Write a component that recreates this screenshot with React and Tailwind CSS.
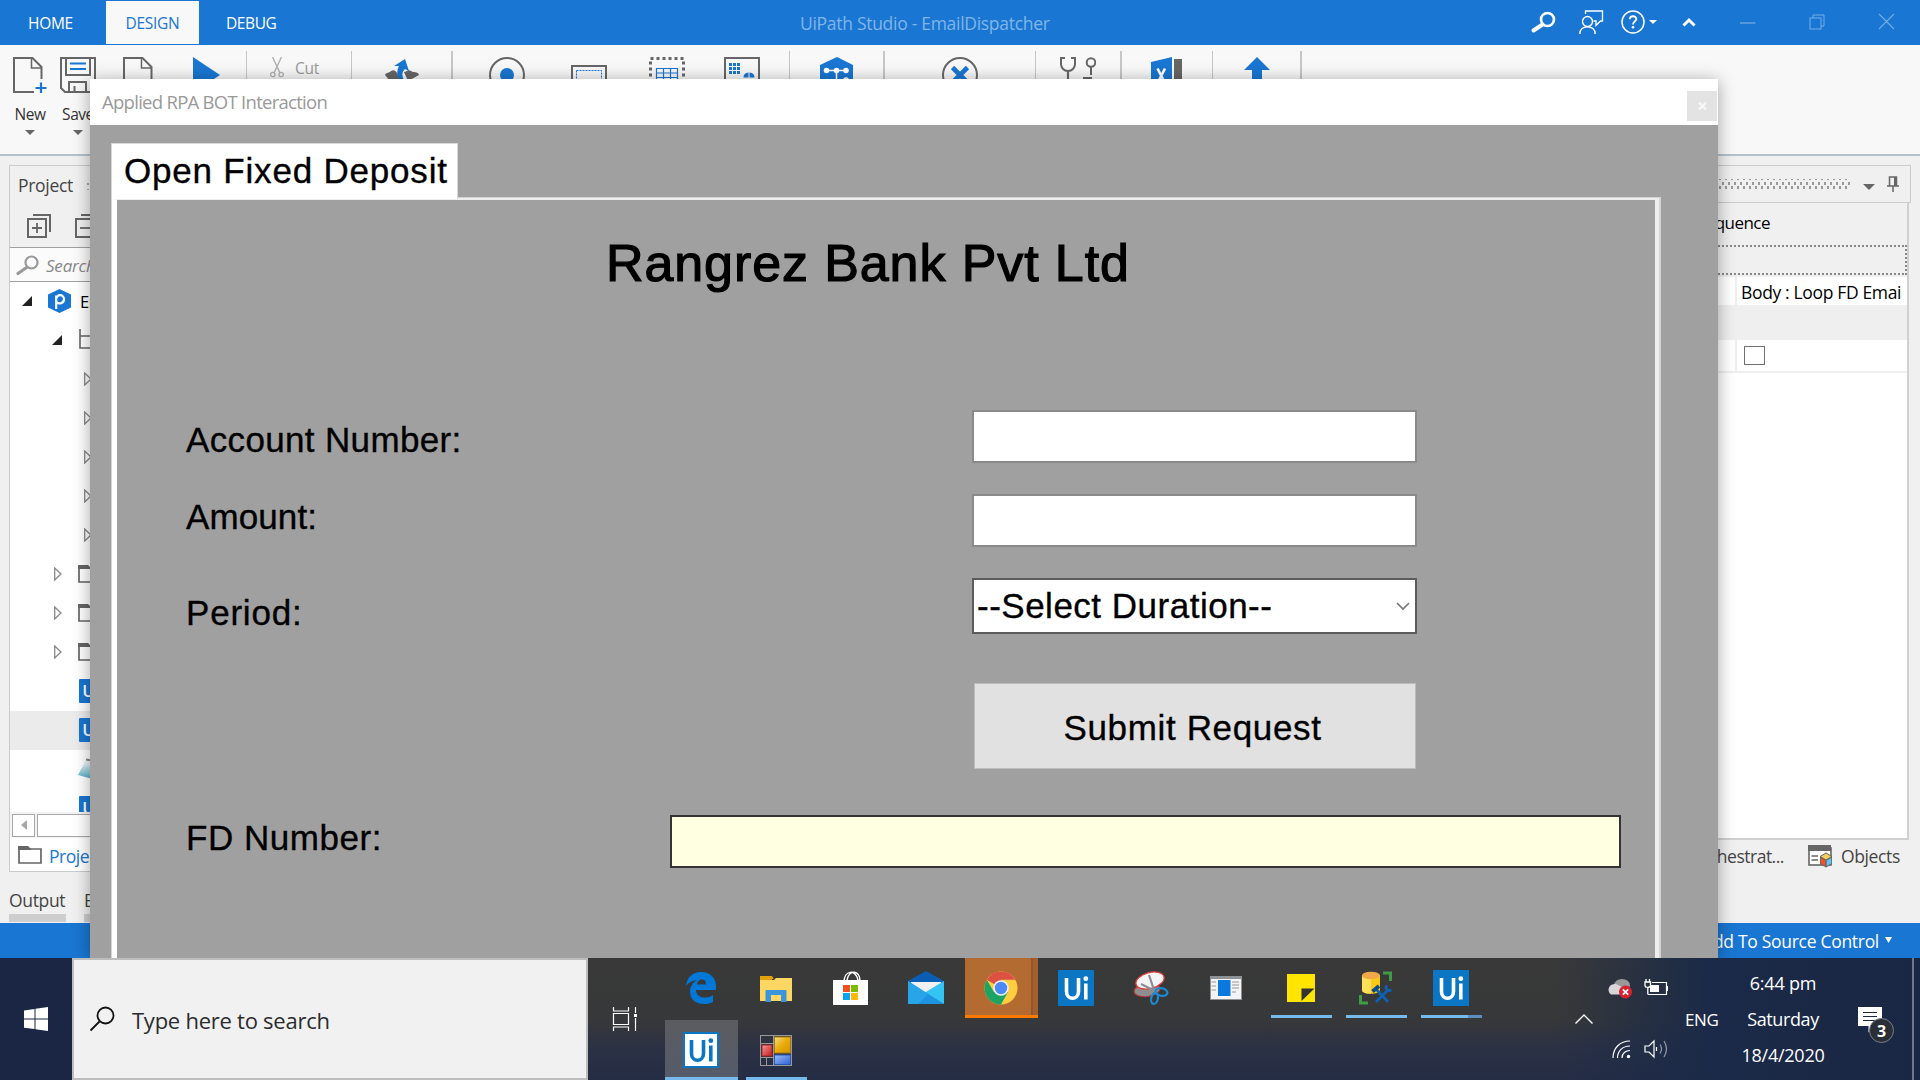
const INK = '#666666';
const BLUE = '#1976d2';

function Svg({ w, h, children, className = '' }) {
  return (
    <svg width={w} height={h} viewBox={`0 0 ${w} ${h}`} fill="none" className={`block shrink-0 ${className}`}>
      {children}
    </svg>
  );
}

function Caret({ className = '' }) {
  return (
    <Svg w={10} h={5} className={className}>
      <path d="M0 0H10L5 5Z" fill={INK} />
    </Svg>
  );
}

/* ---------- title bar ---------- */

function TitleBar() {
  return (
    <header className="relative flex h-[45px] shrink-0 items-stretch bg-[#1976d2] text-[15.5px] text-white">
      <div className="flex w-[106px] items-center pl-[28px] pt-[3px]">
        <span className="tracking-[-0.3px]">HOME</span>
      </div>
      <div className="mt-px flex h-[43px] w-[93px] items-center justify-center bg-[#f8f8f8] pt-[2px] text-[#1976d2]">
        <span className="tracking-[-0.3px]">DESIGN</span>
      </div>
      <div className="flex items-center pl-[27px] pt-[3px]">
        <span className="tracking-[-0.4px]">DEBUG</span>
      </div>
      <div className="pointer-events-none absolute inset-0 flex items-center pl-[800px] pt-[2px] text-[17.5px] text-[#81b5e8]">
        <span className="whitespace-nowrap tracking-[-0.29px]">UiPath Studio - EmailDispatcher</span>
      </div>
      <div className="ml-auto flex items-start pt-[10px]">
        <Svg w={26} h={26} className="mr-[22px]">
          <circle cx="16.500" cy="9.500" r="6.500" stroke="#fff" strokeWidth="2.600" />
          <path d="M11.500 14.500L2.500 20.500" stroke="#fff" strokeWidth="4" strokeLinecap="round" />
        </Svg>
        <Svg w={26} h={26} className="mr-[16px]">
          <path d="M6.500 4V1H23.500V11H21.500L17 15.500V11H14.500" stroke="#fff" strokeWidth="1.300" />
          <circle cx="8.500" cy="11.500" r="5" stroke="#fff" strokeWidth="1.400" />
          <path d="M0.800 24C0.800 19 4.500 16.800 8.500 16.800S16.200 19 16.200 24" stroke="#fff" strokeWidth="1.400" />
        </Svg>
        <div className="mr-[25px] flex h-[24px] items-center">
          <Svg w={24} h={24}>
            <circle cx="12" cy="12" r="11" stroke="#fff" strokeWidth="1.500" />
            <path d="M8.800 9.200C8.800 5.300 15.300 5.300 15.300 9C15.300 11.300 12 11.500 12 14.500" stroke="#fff" strokeWidth="1.900" />
            <circle cx="12" cy="17.300" r="1.300" fill="#fff" />
          </Svg>
          <Svg w={8} h={4} className="ml-[4px]">
            <path d="M0 0H8L4 4Z" fill="#fff" />
          </Svg>
        </div>
        <Svg w={14} h={24} className="mr-[44px]">
          <path d="M1.500 15.500L7 10L12.500 15.500" stroke="#fff" strokeWidth="3" />
        </Svg>
        <Svg w={16} h={24} className="mr-[53px]">
          <path d="M0 13H15.500" stroke="#75aee6" strokeWidth="1.200" />
        </Svg>
        <Svg w={17} h={24} className="mr-[52px]">
          <rect x="1" y="8" width="11" height="11" stroke="#75aee6" />
          <path d="M4 8V5H15V16H12" stroke="#75aee6" />
        </Svg>
        <Svg w={17} h={24} className="mr-[25px]">
          <path d="M1 4L16 19M16 4L1 19" stroke="#75aee6" strokeWidth="1.100" />
        </Svg>
      </div>
    </header>
  );
}

/* ---------- ribbon ---------- */

function PageIcon({ w = 34 }) {
  return (
    <Svg w={w} h={36}>
      <path d="M21 35H1V1H19.500L28.500 10V22" stroke={INK} strokeWidth="2" />
      <path d="M18.500 1V11H28.500" stroke={INK} strokeWidth="1.500" />
      <path d="M28 25.500V36M22.500 31H33.500" stroke={BLUE} strokeWidth="2.200" />
    </Svg>
  );
}

function RibbonGroup({ className, children }) {
  return <div className={`mt-[6px] flex h-[92px] shrink-0 border-[#c6c6c6] pt-[6px] ${className}`}>{children}</div>;
}

function Ribbon() {
  return (
    <div className="flex h-[111px] shrink-0 items-start border-b-2 border-[#b5c1cb] bg-[#f8f8f8] text-[15.500px] text-[#333]">
      <RibbonGroup className="w-[247px] border-r">
        <div className="flex w-[58px] flex-col items-center pl-[2px]">
          <PageIcon />
          <span className="mt-[10px] leading-[22px] tracking-[-0.45px]">New</span>
          <Caret className="mt-[5px]" />
        </div>
        <div className="flex w-[40px] flex-col items-center">
          <Svg w={36} h={36}>
            <path d="M1 1H35V35H5L1 31Z" stroke={INK} strokeWidth="2" />
            <path d="M6 1V18H30V1" stroke={INK} strokeWidth="2" />
            <path d="M10 6.500H26M10 12H26" stroke={BLUE} strokeWidth="2" />
            <path d="M9 35V25H26V35M14.500 35V29" stroke={INK} strokeWidth="2" />
          </Svg>
          <span className="mt-[10px] leading-[22px] tracking-[-0.45px]">Save</span>
          <Caret className="mt-[5px]" />
        </div>
        <div className="flex w-[82px] justify-center pr-[2px]">
          <PageIcon w={30} />
        </div>
        <div className="pl-[13px]">
          <Svg w={28} h={36}>
            <path d="M0 0L27 18L0 36Z" fill={BLUE} />
          </Svg>
        </div>
      </RibbonGroup>
      <RibbonGroup className="w-[105px] border-r">
        <Svg w={14} h={21} className="ml-[23px]">
          <path d="M2.500 0L10 16M11.500 0L4 16" stroke="#b0b0b0" strokeWidth="1.400" />
          <circle cx="2.800" cy="17.500" r="2.200" stroke="#b0b0b0" strokeWidth="1.300" />
          <circle cx="11.200" cy="17.500" r="2.200" stroke="#b0b0b0" strokeWidth="1.300" />
        </Svg>
        <span className="ml-[11px] leading-[23px] tracking-[-0.2px] text-[#999]">Cut</span>
      </RibbonGroup>
      <RibbonGroup className="w-[101px] border-r-2">
        <Svg w={36} h={36} className="ml-[32px]">
          <path d="M1 18C2 15 6 16 7 14C10 12 12 14 13 16L16 24H6ZM20 15C23 15 24 12 27 14C29 16 34 14 35 18L24 24Z" fill={INK} />
          <path d="M10 9L21 2L25 14L21 12C17 16 18 20 21 24H16C12 18 13 13 15 9Z" fill={BLUE} />
        </Svg>
      </RibbonGroup>
      <RibbonGroup className="w-[337px] border-r">
        <Svg w={36} h={36} className="ml-[36px]">
          <circle cx="18" cy="18" r="17" stroke={INK} strokeWidth="2" />
          <circle cx="18" cy="18" r="7" fill={BLUE} />
        </Svg>
        <Svg w={36} h={36} className="ml-[46px]">
          <rect x="1" y="9" width="34" height="26" stroke={INK} strokeWidth="2" />
          <rect x="5.500" y="13.500" width="25" height="18" stroke={BLUE} strokeDasharray="2 1" />
        </Svg>
        <Svg w={36} h={36} className="ml-[42px]">
          <rect x="1.500" y="1.500" width="33" height="33" stroke={INK} strokeWidth="3" strokeDasharray="3 3" />
          <path d="M7.500 11.500H28.500V30H7.500ZM7.500 16H28.500M7.500 20.500H28.500M14.500 11.500V30M21.500 11.500V30" stroke={BLUE} strokeWidth="1.200" />
        </Svg>
        <Svg w={36} h={36} className="ml-[39px]">
          <rect x="1" y="1" width="34" height="34" stroke={INK} strokeWidth="2" />
          <path d="M5 7.500H16M5 11.500H16M5 15.500H16" stroke={BLUE} strokeWidth="3" strokeDasharray="3 1" />
          <path d="M19.500 20.500A5.500 5 0 0 1 24.500 15.500V20.500ZM25.500 15.500A5.500 5 0 0 1 30.500 20.500H25.500Z" fill={BLUE} />
        </Svg>
      </RibbonGroup>
      <RibbonGroup className="w-[95px] border-r-2">
        <Svg w={34} h={36} className="ml-[30px]">
          <path d="M17 0L33 8V28L17 36L0 28V8Z" fill={BLUE} />
          <path d="M7 13.500H27M16.500 13.500V24H27" stroke="#fff" strokeWidth="1.600" />
          <circle cx="6.500" cy="13.500" r="2.800" fill="#fff" />
          <circle cx="16.500" cy="13.500" r="2.800" fill="#fff" />
          <circle cx="26" cy="13.500" r="2.800" fill="#fff" />
          <circle cx="26" cy="23" r="2.800" fill="#fff" />
        </Svg>
      </RibbonGroup>
      <RibbonGroup className="w-[151px] border-r">
        <Svg w={36} h={36} className="ml-[57px]">
          <circle cx="18" cy="18" r="17" stroke={INK} strokeWidth="2" />
          <path d="M10.500 10.500L25.500 25.500M25.500 10.500L10.500 25.500" stroke={BLUE} strokeWidth="4.600" />
        </Svg>
      </RibbonGroup>
      <RibbonGroup className="w-[86px] border-r-2">
        <Svg w={36} h={36} className="ml-[24px]">
          <path d="M5 1H1V7C1 11 4 14 8 14S15 11 15 7V1H11" stroke={INK} strokeWidth="2" />
          <path d="M8 14V36" stroke={INK} strokeWidth="2.200" />
          <circle cx="31" cy="5.500" r="4.300" stroke={INK} strokeWidth="2" />
          <path d="M31 10V18M23 21H32" stroke={INK} strokeWidth="2" />
        </Svg>
      </RibbonGroup>
      <RibbonGroup className="w-[91px] border-r">
        <Svg w={32} h={36} className="ml-[29px]">
          <path d="M0 5L21 0V36L0 31Z" fill={BLUE} />
          <path d="M6.500 11.500L14 26M14 11.500L6.500 26" stroke="#fff" strokeWidth="2.600" />
          <path d="M23 2H31V34H23Z" fill={INK} />
        </Svg>
      </RibbonGroup>
      <RibbonGroup className="w-[89px] border-r-2">
        <Svg w={26} h={36} className="ml-[31px]">
          <path d="M13 0L26 13H18V36H8V13H0Z" fill={BLUE} />
        </Svg>
      </RibbonGroup>
    </div>
  );
}

/* ---------- project panel ---------- */

function Expanded() {
  return (
    <Svg w={10} h={10}>
      <path d="M10 0V10H0Z" fill="#222" />
    </Svg>
  );
}

function Collapsed() {
  return (
    <Svg w={8} h={14}>
      <path d="M0.700 1V13L7 7Z" stroke="#888" strokeWidth="1.300" />
    </Svg>
  );
}

function FolderIcon() {
  return (
    <Svg w={24} h={18}>
      <path d="M1 17V3H23V17Z" stroke={INK} strokeWidth="1.700" />
      <path d="M0 0H10L13 3V4H0Z" fill={INK} />
    </Svg>
  );
}

function UiFile() {
  return (
    <span className="flex h-[24px] w-[24px] items-center justify-center rounded-[1px] bg-[#1976d2] text-[17px] font-semibold leading-none text-white">
      Ui
    </span>
  );
}

function TreeRow({ className = '', children }) {
  return <div className={`flex h-[39px] shrink-0 items-center pb-[2px] ${className}`}>{children}</div>;
}

function ProjectPanel() {
  return (
    <div className="mt-[9px] flex h-[707px] w-[420px] flex-col border border-[#cbcbcb] bg-[#f0f0f0]">
      <div className="flex h-[36px] shrink-0 items-center pl-[8px] pt-[3px]">
        <span className="text-[17.500px] tracking-[-0.3px] text-[#444]">Project</span>
        <div className="ml-[12px] h-[9px] w-[200px] bg-[radial-gradient(#a8a8a8_1px,transparent_1.2px)] bg-[size:6px_6px]" />
      </div>
      <div className="flex h-[46px] shrink-0 items-center gap-[24px] border-b border-[#a0a0a0] pl-[17px] pt-[2px]">
        <Svg w={24} h={24}>
          <path d="M6 1H23V18" stroke={INK} strokeWidth="2" />
          <rect x="1" y="5" width="18" height="18" stroke={INK} strokeWidth="2" />
          <path d="M5 14H15M10 9V19" stroke={INK} strokeWidth="1.800" />
        </Svg>
        <Svg w={24} h={24}>
          <path d="M6 1H23V18" stroke={INK} strokeWidth="2" />
          <rect x="1" y="5" width="18" height="18" stroke={INK} strokeWidth="2" />
          <path d="M5 14H15" stroke={INK} strokeWidth="1.800" />
        </Svg>
      </div>
      <div className="flex h-[34px] shrink-0 items-center border-b border-[#a0a0a0] bg-[#fbfbfb] pl-[6px] pt-[3px]">
        <Svg w={24} h={22}>
          <circle cx="15.500" cy="7.500" r="6" stroke="#999" strokeWidth="2.200" />
          <path d="M10.500 12.500L2 18.500" stroke="#999" strokeWidth="3.200" strokeLinecap="round" />
        </Svg>
        <span className="ml-[6px] text-[17px] italic tracking-[-0.2px] text-[#888]">Search</span>
      </div>
      <div className="flex h-[530px] shrink-0 flex-col overflow-hidden bg-white">
        <TreeRow className="pl-[12px]">
          <Expanded />
          <Svg w={24} h={24} className="ml-[16px]">
            <path d="M11.500 0L23 5.500V18.500L11.500 24L0 18.500V5.500Z" fill={BLUE} />
            <path d="M8.200 20V6.500M8.200 10.500C8.200 4.500 16 5 16 10.200S9.500 15 8.500 13" stroke="#fff" strokeWidth="2.200" />
          </Svg>
          <span className="ml-[8px] pt-[4px] text-[16.500px] tracking-[-0.3px] text-black">EmailDispatcher</span>
        </TreeRow>
        <TreeRow className="pl-[42px]">
          <Expanded />
          <Svg w={24} h={24} className="ml-[17px]">
            <path d="M1 1V20H14M1 8H14M14 5V11M14 17V23" stroke={INK} strokeWidth="1.600" />
          </Svg>
        </TreeRow>
        {[0, 1, 2, 3, 4].map((i) => (
          <TreeRow key={i} className="pl-[74px]">
            <Collapsed />
          </TreeRow>
        ))}
        {[0, 1, 2].map((i) => (
          <TreeRow key={i} className="gap-[16px] pl-[44px]">
            <Collapsed />
            <FolderIcon />
          </TreeRow>
        ))}
        <TreeRow className="pl-[69px]">
          <UiFile />
        </TreeRow>
        <TreeRow className="bg-[#ebebeb] pl-[69px]">
          <UiFile />
        </TreeRow>
        <TreeRow className="pl-[68px]">
          <Svg w={26} h={22}>
            <defs>
              <linearGradient id="note" x1="0" y1="0" x2="0" y2="1">
                <stop offset="0.2" stopColor="#e3f0f4" />
                <stop offset="1" stopColor="#3fa9bf" />
              </linearGradient>
            </defs>
            <path d="M8 2L24 4L18 22L0 17Z" fill="url(#note)" />
            <path d="M8 1.500L24 4" stroke="#888" strokeWidth="2" />
          </Svg>
        </TreeRow>
        <TreeRow className="pl-[69px]">
          <UiFile />
        </TreeRow>
      </div>
      <div className="flex h-[26px] shrink-0 items-center gap-[2px] bg-[#f3f3f3] pl-[2px]">
        <div className="flex h-[23px] w-[23px] items-center justify-center border border-[#a8a8a8] bg-white">
          <Svg w={6} h={10}>
            <path d="M6 0V10L0 5Z" fill="#a8a8a8" />
          </Svg>
        </div>
        <div className="h-[23px] w-[200px] border border-[#a8a8a8] bg-white" />
      </div>
      <div className="flex h-[33px] items-center bg-white pl-[8px]">
        <FolderIcon />
        <span className="ml-[7px] pt-[3px] text-[17.500px] tracking-[-0.45px] text-[#1976d2]">Project</span>
      </div>
    </div>
  );
}

/* ---------- properties panel ---------- */

function PropertiesPanel() {
  return (
    <div className="mt-[9px] w-[311px]">
      <div className="mr-[-1px] flex h-[38px] items-center justify-end border border-[#cbcbcb] pr-[11px]">
        <div className="mr-[12px] h-[10px] w-[260px] bg-[radial-gradient(#999_1px,transparent_1.3px),radial-gradient(#999_1px,transparent_1.3px)] bg-[size:6px_9px] bg-[position:0_0,3px_4px]" />
        <Svg w={12} h={6} className="mr-[12px] mt-[5px]">
          <path d="M0 0H12L6 6Z" fill={INK} />
        </Svg>
        <Svg w={12} h={16}>
          <path d="M2.500 10V1H9.500V10M0 10H12M6 10V16" stroke={INK} strokeWidth="1.500" />
          <path d="M7 1H9.500V10H7Z" fill={INK} />
        </Svg>
      </div>
      <div className="mr-px flex h-[637px] flex-col border-b-2 border-r-2 border-[#d0d0d0] bg-white">
        <div className="flex h-[42px] shrink-0 items-center bg-[#f0f0f0] pb-[2px] pl-[98px] text-[17px] text-black">
          <span className="tracking-[-0.55px]">Sequence</span>
        </div>
        <div className="h-[30px] shrink-0 border-2 border-dotted border-[#888] bg-[#f0f0f0]" />
        <div className="flex h-[32px] shrink-0 border-b-2 border-t-2 border-[#efefef]">
          <div className="w-[138px] border-r-2 border-[#efefef]" />
          <div className="ml-[4px] flex-1 overflow-hidden whitespace-nowrap text-[17.500px] leading-[30px] text-black">
            <span className="tracking-[-0.35px]">Body : Loop FD Emai</span>
          </div>
        </div>
        <div className="h-[32px] shrink-0 bg-[#efefef]" />
        <div className="flex h-[34px] shrink-0 items-center border-b-2 border-t border-[#efefef]">
          <div className="h-full w-[138px] border-r-2 border-[#efefef]" />
          <div className="ml-[7px] h-[19px] w-[21px] border border-[#707070] bg-white" />
        </div>
      </div>
      <div className="flex h-[32px] items-center justify-end pr-[10px] text-[17.500px] text-[#444]">
        <span className="tracking-[-0.5px]">Orchestrat...</span>
        <Svg w={24} h={23} className="ml-[24px]">
          <rect x="1" y="3" width="22" height="17" stroke={INK} strokeWidth="1.600" fill="#fff" />
          <path d="M0 0H23V6H0Z" fill={INK} />
          <path d="M3.500 11H10M3.500 15H10" stroke={INK} strokeWidth="1.600" />
          <path d="M18 7.500L24 11V19L18 22.500L12 19V11Z" fill={INK} />
          <path d="M18 8.500L23 11.500L18 14.500L13 11.500Z" fill="#f5d05c" />
          <path d="M12.800 13L17.300 15.500V21L12.800 18.500Z" fill="#f4511e" />
          <path d="M23.200 13L18.700 15.500V21L23.200 18.500Z" fill="#5ec5f0" />
        </Svg>
        <span className="ml-[9px] tracking-[-0.35px]">Objects</span>
      </div>
    </div>
  );
}

/* ---------- dialog ---------- */

function Dialog() {
  return (
    <section className="absolute left-[90px] top-[79px] flex h-[879px] w-[1628px] flex-col bg-[#a0a0a0] shadow-[0_2px_16px_rgba(0,0,0,0.35)]">
      <div className="flex h-[46px] shrink-0 items-center justify-between bg-white pl-[12px] pr-px">
        <span className="text-[18.500px] tracking-[-0.72px] text-[#999]">Applied RPA BOT Interaction</span>
        <div className="mt-[8px] flex h-[30px] w-[30px] items-center justify-center bg-[#e3e3e3]">
          <Svg w={9} h={8}>
            <path d="M1 0.500L8 7.500M8 0.500L1 7.500" stroke="#f7f7f7" strokeWidth="2.200" />
          </Svg>
        </div>
      </div>
      <div className="flex min-h-0 flex-1 flex-col pl-[21px] pr-[57px] pt-[18px] font-['Liberation_Sans',sans-serif] text-[35px] text-black [-webkit-text-stroke:0.35px_black]">
        <div className="z-10 flex h-[56px] w-[347px] shrink-0 items-center border border-b-0 border-[#d8d8d8] bg-white pb-[3px] pl-[12px]">
          <span className="whitespace-nowrap leading-none tracking-[0.8px]">Open Fixed Deposit</span>
        </div>
        <div className="-mt-[2px] flex min-h-0 flex-1 flex-col border-l border-r-2 border-t border-[#d4d4d4]">
          <div className="flex min-h-0 flex-1 flex-col border-l-[5px] border-r-[4px] border-t-2 border-white border-r-[#eeeeee] border-t-[#eeeeee] pl-[69px]">
            <h1 className="mt-[33px] h-[60px] self-start pl-[420px] text-[52px] leading-[60px] tracking-[0.9px] [-webkit-text-stroke:1.2px_black]">
              Rangrez Bank Pvt Ltd
            </h1>
            <div className="mt-[117px] flex h-[53px] items-center tracking-[0.35px]">
              <label className="w-[786px] pt-[7px]">Account Number:</label>
              <div className="h-full w-[445px] border-2 border-[#8a8a8a] bg-white" />
            </div>
            <div className="mt-[31px] flex h-[53px] items-center tracking-[0.1px]">
              <label className="w-[786px] pb-[7px]">Amount:</label>
              <div className="h-full w-[445px] border-2 border-[#8a8a8a] bg-white" />
            </div>
            <div className="mt-[31px] flex h-[56px] items-center tracking-[0.8px]">
              <label className="w-[786px] pt-[14px]">Period:</label>
              <div className="flex h-full w-[445px] items-center justify-between border-2 border-[#5c5c5c] bg-white pl-[3px] pr-[5px]">
                <span className="pb-[2px] leading-none tracking-[0.5px]">--Select Duration--</span>
                <Svg w={14} h={9}>
                  <path d="M1 1L7 7L13 1" stroke="#777" strokeWidth="1.700" />
                </Svg>
              </div>
            </div>
            <div className="ml-[788px] mt-[49px] flex h-[86px] w-[442px] items-center justify-center border border-[#bcbcbc] bg-[#e1e1e1]">
              <span className="pr-[5px] pt-[2px] leading-none tracking-[0.65px]">Submit Request</span>
            </div>
            <div className="mt-[46px] flex h-[53px] items-center">
              <label className="w-[484px] pb-[7px] tracking-[0.55px]">FD Number:</label>
              <div className="h-full w-[951px] border-2 border-[#333] bg-[#ffffe1]" />
            </div>
          </div>
        </div>
      </div>
    </section>
  );
}

/* ---------- taskbar ---------- */

function EdgeIcon() {
  return (
    <Svg w={32} h={34}>
      <path
        d="M1 15C2 6 8 1 16 1C25 1 31 7 31 15V19H11C11 24 15 26.500 20 26.500C24 26.500 27 25 28 24V31C25 32.500 22 33 19 33C10 33 5 28 5 20C5 16 8 11 12 9C7 9.500 3 12 1 15ZM12 13.500H21C21 10.500 20 8.500 17 8.500C14 8.500 12.500 10.500 12 13.500Z"
        fill="#0078d7"
      />
    </Svg>
  );
}

function ExplorerIcon() {
  return (
    <Svg w={32} h={27}>
      <path d="M0 1H12L14 4H12V8H0Z" fill="#e3a00d" />
      <path d="M0 5H14L16 3H32V26H0Z" fill="#fdd663" />
      <path d="M5.500 27V16Q5.500 15 6.500 15H25.500Q26.500 15 26.500 16V27H21V20H11V27Z" fill="#3a95dd" />
    </Svg>
  );
}

function StoreIcon() {
  return (
    <Svg w={35} h={35}>
      <path d="M11 11C11 -1 23 -2 25 9M14 9C16 -2 27 -1 27 10" stroke="#fff" strokeWidth="1.500" />
      <path d="M0 9H35V34H0Z" fill="#fff" />
      <path d="M10 14H17V21H10Z" fill="#f25022" />
      <path d="M18 14H25V21H18Z" fill="#7fba00" />
      <path d="M10 22H17V29H10Z" fill="#00a4ef" />
      <path d="M18 22H25V29H18Z" fill="#ffb900" />
    </Svg>
  );
}

function MailIcon() {
  return (
    <Svg w={36} h={34}>
      <path d="M0 10L18 0L36 10V18H0Z" fill="#0a5fb4" />
      <path d="M3 11H33V26H3Z" fill="#f1f1f1" />
      <path d="M36 10V33L16 22Z" fill="#35c3f3" />
      <path d="M0 10L36 33H0Z" fill="#1e93e0" />
      <path d="M0 10V33H10L20 23Z" fill="#27a5e8" />
    </Svg>
  );
}

function ChromeIcon() {
  return (
    <Svg w={34} h={34}>
      <circle cx="17" cy="17" r="16.500" fill="#ffcd40" />
      <path d="M17 17L2.700 8.800A16.500 16.500 0 0 1 31.300 8.800H17Z" fill="#dd5144" />
      <path d="M2.700 8.800A16.500 16.500 0 0 0 17 33.500L24 21L17 17L10 21Z" fill="#1da462" />
      <circle cx="17" cy="17" r="7.800" fill="#f1f1f1" />
      <circle cx="17" cy="17" r="6.200" fill="#4c8bf5" />
    </Svg>
  );
}

function UiTile({ inverted = false }) {
  return (
    <Svg w={36} h={36}>
      <rect width="36" height="36" rx="0.500" fill="#0a76c4" />
      {inverted && <rect x="2" y="2" width="32" height="32" fill="#fff" />}
      <g stroke={inverted ? '#0a76c4' : '#fff'} strokeWidth="3.600">
        <path d="M8.500 8V21.500C8.500 30.500 20.500 30.500 20.500 21.500V8" />
        <path d="M27.800 13.500V29.500" />
      </g>
      <circle cx="27.800" cy="8.700" r="2.400" fill={inverted ? '#0a76c4' : '#fff'} />
    </Svg>
  );
}

function SnipIcon() {
  return (
    <Svg w={36} h={36}>
      <ellipse cx="14" cy="20" rx="13" ry="6.500" fill="#8e8e8e" stroke="#b33" transform="rotate(-8 14 20)" />
      <ellipse cx="17" cy="10.500" rx="14.500" ry="8" fill="#f5f5f5" stroke="#e23b3b" strokeWidth="1.300" transform="rotate(-15 17 10.500)" />
      <path d="M16 5L21 20M8 14L22 21" stroke="#8a8f96" strokeWidth="2.200" />
      <ellipse cx="28.500" cy="22" rx="6" ry="3.800" stroke="#1b8bd6" strokeWidth="2.200" transform="rotate(12 28.500 22)" />
      <ellipse cx="21.500" cy="28.500" rx="3.300" ry="5.500" stroke="#1b8bd6" strokeWidth="2.200" transform="rotate(12 21.500 28.500)" />
    </Svg>
  );
}

function NewsIcon() {
  return (
    <Svg w={32} h={24}>
      <rect width="32" height="24" fill="#8d9296" />
      <rect x="1" y="3" width="30" height="20" fill="#f3f3f3" />
      <rect x="8" y="4" width="12.500" height="16" fill="#0a78dc" />
      <path d="M1.500 6H6M1.500 10H6M1.500 14H6M22 6H29M22 9H29M22 12H29M22 16H26" stroke="#9a9a9a" />
    </Svg>
  );
}

function StickyIcon() {
  return (
    <Svg w={28} h={28}>
      <path d="M0 0H28V14L14 28H0Z" fill="#ffe500" />
      <path d="M14 14H28V28H14Z" fill="#ffe500" />
      <path d="M14.500 27V14.500H27.500Z" fill="#333" />
    </Svg>
  );
}

function DatabaseIcon() {
  return (
    <Svg w={34} h={34}>
      <path d="M3 4V19C3 24 21 24 21 19V4Z" fill="#fbc916" />
      <path d="M3 4V19C3 22 9 23 12 22.500V6Z" fill="#ffdf5a" />
      <ellipse cx="12" cy="4.500" rx="9" ry="3.800" fill="#f0a94a" />
      <path d="M24 2H31.500V10M1.500 24V32H9" stroke="#3f9b46" strokeWidth="3" />
      <path d="M17 31L29 19M29 31L17 18" stroke="#0b62b8" strokeWidth="2.600" />
      <path d="M13.500 20.500L20 15" stroke="#0b4a90" strokeWidth="3.800" />
      <path d="M28 14.500C25.500 17 28 21 32.500 19" stroke="#0b62b8" strokeWidth="2.600" />
    </Svg>
  );
}

function FormsIcon() {
  return (
    <Svg w={32} h={31}>
      <defs>
        <linearGradient id="gold" x1="0" y1="0" x2="1" y2="1">
          <stop stopColor="#f6dc86" />
          <stop offset="0.500" stopColor="#e8ab08" />
          <stop offset="1" stopColor="#d29500" />
        </linearGradient>
        <linearGradient id="ruby" x1="0" y1="0" x2="1" y2="1">
          <stop stopColor="#f39a9a" />
          <stop offset="1" stopColor="#c41818" />
        </linearGradient>
        <linearGradient id="azure" x1="0" y1="0" x2="1" y2="1">
          <stop stopColor="#9dbcf8" />
          <stop offset="1" stopColor="#2c62d6" />
        </linearGradient>
      </defs>
      <rect x="0.500" y="0.500" width="31" height="30" stroke="#999" />
      <path d="M13.500 0V31M0 8.500H13M0 22.500H13M6.500 22V31" stroke="#999" />
      <rect x="14.500" y="2" width="16" height="16" fill="url(#gold)" stroke="#a87b10" />
      <rect x="2" y="10" width="10" height="11" fill="url(#ruby)" stroke="#a02828" />
      <rect x="14.500" y="20" width="16" height="9.500" fill="url(#azure)" stroke="#2b56b0" />
    </Svg>
  );
}

function Task({ children, className = '', line = '' }) {
  return (
    <div className={`mr-[2px] flex h-[60px] w-[73px] flex-col items-center ${className}`}>
      <div className="flex h-[57px] w-full items-center justify-center pr-[2px] pt-[3px]">{children}</div>
      <div className={`h-[3px] ${line}`} />
    </div>
  );
}

function Taskbar() {
  return (
    <footer className="flex h-[122px] shrink-0 bg-[linear-gradient(90deg,#1b2645_0%,#1b2645_4%,transparent_14%,transparent_81%,#1b2a48_89%,#1a2744_100%),linear-gradient(180deg,#393939_0%,#373839_50%,#2b3145_75%,#252d44_100%)]">
      <div className="flex w-[72px] items-center justify-center">
        <Svg w={24} h={24}>
          <path d="M0 3.500L10.500 2V11.500H0ZM11.500 1.800L24 0V11.500H11.500ZM0 12.500H10.500V22L0 20.700ZM11.500 12.500H24V24L11.500 22.300Z" fill="#fff" />
        </Svg>
      </div>
      <div className="flex w-[516px] items-center border-2 border-[#bdbdbd] bg-[#f1f1f1] pl-[15px]">
        <Svg w={26} h={26}>
          <circle cx="16.500" cy="9.500" r="8" stroke="#111" strokeWidth="1.800" />
          <path d="M10.500 15.500L1.500 24.500" stroke="#111" strokeWidth="1.800" />
        </Svg>
        <span className="ml-[17px] pt-[3px] text-[22px] tracking-[-0.25px] text-[#2b2b2b]">Type here to search</span>
      </div>
      <div className="flex w-[77px] items-center justify-center pr-[3px]">
        <Svg w={26} h={24}>
          <path d="M1.500 0V4H16.500V0M1.500 24V20H16.500V24M1.500 6.500H16.500V17.500H1.500ZM23.500 0V6M23.500 11V24" stroke="#fff" strokeWidth="1.200" />
          <path d="M22 7H25V10H22Z" fill="#fff" />
        </Svg>
      </div>
      <div className="flex w-[826px] flex-wrap content-between">
        <Task><EdgeIcon /></Task>
        <Task><ExplorerIcon /></Task>
        <Task><StoreIcon /></Task>
        <Task><MailIcon /></Task>
        <Task className="bg-[linear-gradient(90deg,#b36b32_0_66px,#94552a_66px_68px,#a4602c_68px)]" line="w-full bg-[#ff7800]">
          <ChromeIcon />
        </Task>
        <Task><UiTile /></Task>
        <Task><SnipIcon /></Task>
        <Task><NewsIcon /></Task>
        <Task line="w-[61px] bg-[#76b9ed]"><StickyIcon /></Task>
        <Task line="w-[61px] bg-[#76b9ed]"><DatabaseIcon /></Task>
        <Task line="w-[61px] bg-[linear-gradient(90deg,#76b9ed_47px,#5a8fc0_47px)]"><UiTile /></Task>
        <Task className="bg-[linear-gradient(180deg,#5b5c60,#555b6b)]" line="w-full bg-[#76b9ed]"><UiTile inverted /></Task>
        <Task line="w-[61px] bg-[#76b9ed]"><FormsIcon /></Task>
      </div>
      <div className="ml-auto flex items-center text-white">
        <Svg w={18} h={10} className="-mt-px mr-[15px]">
          <path d="M0.500 9.500L9 1L17.500 9.500" stroke="#fff" strokeWidth="1.400" />
        </Svg>
        <div className="mr-[17px] grid grid-cols-[24px_24px] gap-x-[12px] gap-y-[40px]">
          <Svg w={24} h={20}>
            <ellipse cx="14" cy="6" rx="8" ry="6" fill="#999" />
            <path d="M3 15.500C-2 12 1 4 8 5L14 8V15.500Z" fill="#d6d6d6" />
            <circle cx="17.500" cy="13" r="6.500" fill="#d8202f" />
            <path d="M14.800 10.300L20.200 15.700M20.200 10.300L14.800 15.700" stroke="#fff" strokeWidth="1.700" />
          </Svg>
          <Svg w={24} h={20}>
            <path d="M8 3.500H22.500V15.500H4" stroke="#fff" strokeWidth="1.200" />
            <path d="M22 7H24V12H22ZM6 6H15V13H6Z" fill="#fff" />
            <path d="M1 3V6.500C1 9 6.500 9 6.500 6.500V3ZM2 0V3M5.500 0V3M3.800 8.500V15.500" stroke="#fff" strokeWidth="1.300" />
          </Svg>
          <Svg w={24} h={20}>
            <path d="M5 19C5 9 12 2 22 2M9.500 19C9.500 12 14.500 7 22 7M14 19C14 14.500 17.500 11.500 22 11.500" stroke="#fff" strokeWidth="1.200" />
            <circle cx="20.500" cy="17.500" r="1.700" fill="#fff" />
          </Svg>
          <Svg w={24} h={20}>
            <path d="M1 7H5L10 2V18L5 13H1Z" stroke="#fff" strokeWidth="1.200" />
            <path d="M12.500 8V12" stroke="#fff" strokeWidth="1.300" />
            <path d="M16 5.500Q19 10 16 14.500M20 2Q25 10 20 18" stroke="#8c94a4" strokeWidth="1.300" />
          </Svg>
        </div>
        <span className="w-[34px] pt-[2px] text-[17px] tracking-[-0.4px]">ENG</span>
        <div className="ml-[18px] flex w-[92px] flex-col items-center text-[18px] leading-[36px]">
          <span className="tracking-[-0.2px]">6:44 pm</span>
          <span className="tracking-[-0.4px]">Saturday</span>
          <span className="tracking-[-0.25px]">18/4/2020</span>
        </div>
        <div className="relative ml-[29px] mr-[18px] mt-[12px] h-[36px] w-[36px]">
          <Svg w={24} h={26}>
            <path d="M0 0H24V19H17L10.500 25.500V19H0Z" fill="#fff" />
            <path d="M5 5.500H19M5 9.500H19M5 13.500H19" stroke="#1c2740" strokeWidth="1.200" />
          </Svg>
          <span className="absolute bottom-0 right-0 flex h-[25px] w-[25px] items-center justify-center rounded-full border border-[#777f8c] bg-[#2a2e35] text-[16px] font-bold leading-none">
            3
          </span>
        </div>
        <div className="h-full w-[8px] border-l-2 border-[#6f788a]" />
      </div>
    </footer>
  );
}

export default function App() {
  return (
    <div className="flex h-[1080px] w-[1920px] flex-col overflow-hidden font-['Open_Sans',sans-serif]">
      <main className="relative flex h-[958px] shrink-0 flex-col overflow-hidden bg-[#f0f0f0]">
        <TitleBar />
        <Ribbon />
        <div className="flex h-[725px] justify-between pl-[9px] pr-[10px]">
          <ProjectPanel />
          <PropertiesPanel />
        </div>
        <div className="flex h-[42px] items-end gap-[18px] pl-[9px] pb-px text-[17.500px] text-[#444]">
          <span className="h-[33px] w-[57px] border-b-8 border-[#cecece] leading-[22px] tracking-[-0.35px]">Output</span>
          <span className="h-[33px] border-b-8 border-[#cecece] leading-[22px] tracking-[-0.3px]">Error List</span>
        </div>
        <div className="flex h-[35px] items-center justify-end bg-[#1976d2] pr-[28px] pt-[2px] text-[17.500px] text-white">
          <span className="tracking-[-0.3px]">Add To Source Control</span>
          <Svg w={7} h={6} className="mb-[3px] ml-[6px]">
            <path d="M0 0H7L3.500 6Z" fill="#fff" />
          </Svg>
        </div>
        <Dialog />
      </main>
      <Taskbar />
    </div>
  );
}
